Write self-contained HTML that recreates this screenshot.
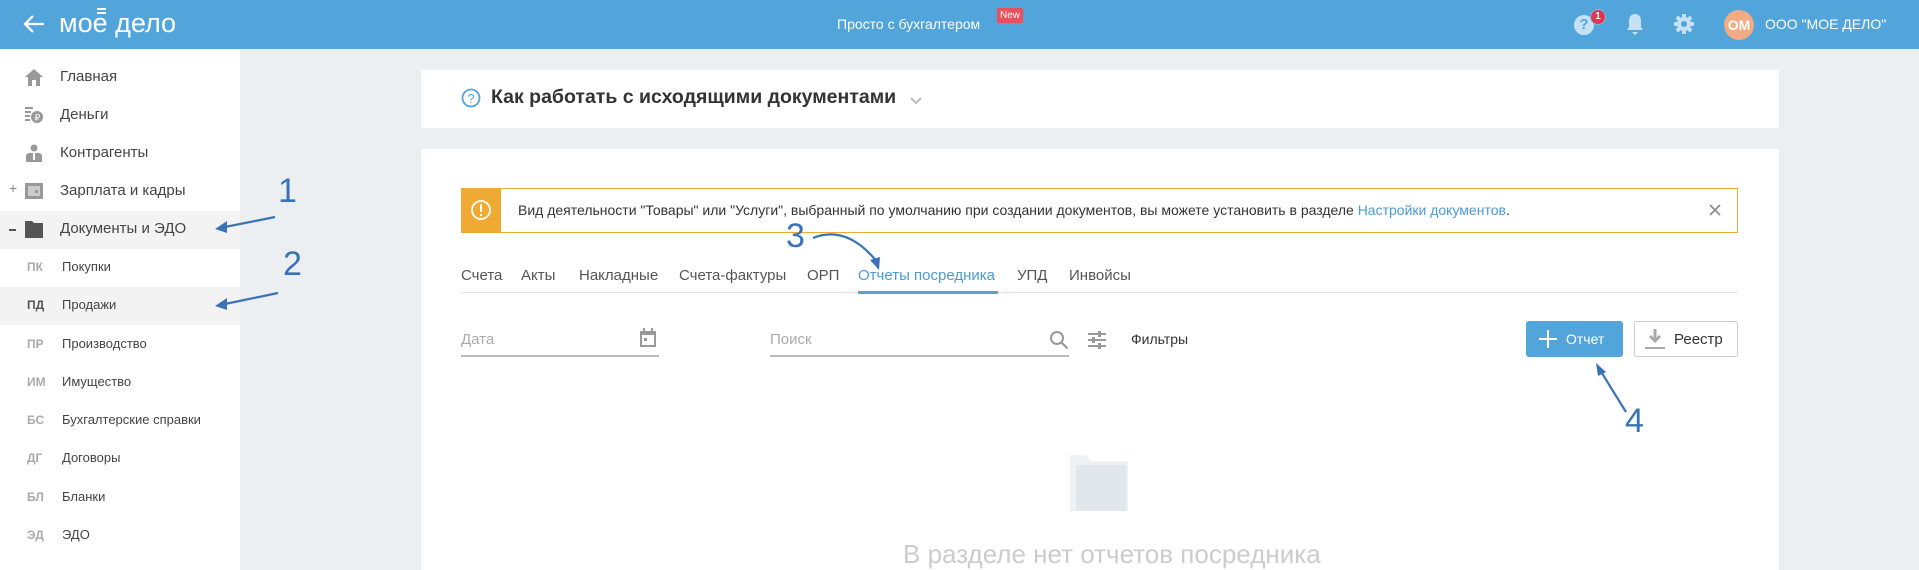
<!DOCTYPE html>
<html><head><meta charset="utf-8"><style>
*{box-sizing:border-box;margin:0;padding:0}
body{width:1919px;height:570px;overflow:hidden;background:#ebeff2;font-family:"Liberation Sans",sans-serif;color:#333;position:relative}
.hdr{position:absolute;left:0;top:0;width:1919px;height:49px;background:#52a5db;color:#fff}
.abs{position:absolute}
.side{position:absolute;left:0;top:49px;width:240px;height:521px;background:#fff}
.it{position:absolute;left:60px;font-size:15px;color:#444;white-space:nowrap}
.ic{position:absolute;left:24px;width:20px;height:18px}
.sub{position:absolute;font-size:13px;color:#444;left:62px}
.ab{position:absolute;left:27px;font-size:12px;font-weight:bold;color:#aaa}
.hl{position:absolute;left:0;width:240px;height:38px;background:#f3f3f3}
.card{position:absolute;background:#fff;left:421px;width:1358px}
.tab{position:absolute;top:267px;font-size:15px;color:#555}
.ann{position:absolute;color:#3a72b8;font-size:34px}
</style></head><body>
<div class="hdr">
<svg class="abs" style="left:22px;top:14px" width="24" height="20"><path d="M22 10H3M11 2L3 10l8 8" stroke="#fff" stroke-width="2.2" fill="none"/></svg>
<div class="abs" style="left:59px;top:8px;font-size:27px;letter-spacing:0">моe дело</div>
<div class="abs" style="left:97px;top:8px;width:9px;height:2px;background:#fff"></div>
<div class="abs" style="left:97px;top:12px;width:9px;height:2px;background:#fff"></div>
<div class="abs" style="left:837px;top:16px;font-size:14px">Просто с бухгалтером</div>
<div class="abs" style="left:997px;top:8px;background:#e8515a;font-size:10px;padding:2px 3px;border-radius:2px">New</div>
<div class="abs" style="left:1574px;top:15px;width:20px;height:20px;border-radius:50%;background:#c6e1f5;color:#52a5db;font-weight:bold;font-size:15px;text-align:center;line-height:20px">?</div>
<div class="abs" style="left:1590px;top:9px;width:16px;height:16px;border-radius:50%;background:#e8334f;border:1px solid #7fbde6;font-size:10px;text-align:center;line-height:14px;font-weight:bold">1</div>
<svg class="abs" style="left:1626px;top:13px" width="18" height="22"><path d="M9 1c-4 0-6 3-6 7v6l-2 3h16l-2-3V8c0-4-2-7-6-7zM6 19h6l-3 3z" fill="#c6e1f5"/></svg>
<svg class="abs" style="left:1673px;top:13px" width="22" height="22"><g fill="#c6e1f5"><circle cx="11" cy="11" r="7"/><rect x="9" y="1" width="4" height="20"/><rect x="1" y="9" width="20" height="4"/><rect x="9" y="1" width="4" height="20" transform="rotate(45 11 11)"/><rect x="9" y="1" width="4" height="20" transform="rotate(-45 11 11)"/></g><circle cx="11" cy="11" r="3" fill="#52a5db"/></svg>
<div class="abs" style="left:1724px;top:10px;width:30px;height:30px;border-radius:50%;background:#f2ab84;font-size:14px;font-weight:bold;text-align:center;line-height:30px">ОМ</div>
<div class="abs" style="left:1765px;top:16px;font-size:14px">ООО "МОЕ ДЕЛО"</div>
</div>

<div class="side">
<div class="hl" style="top:162px"></div>
<div class="hl" style="top:238px"></div>
<svg class="ic" style="top:19px" viewBox="0 0 20 18"><path d="M10 1L1 9h3v9h4v-6h4v6h4V9h3z" fill="#999"/></svg>
<div class="it" style="top:19px">Главная</div>
<svg class="ic" style="top:57px" viewBox="0 0 20 18"><g fill="#999"><rect x="1" y="1" width="8" height="2"/><rect x="1" y="5" width="6" height="2"/><rect x="1" y="9" width="5" height="2"/><rect x="1" y="13" width="5" height="2"/><circle cx="13" cy="11" r="6"/></g><text x="10.5" y="14.5" font-size="9" fill="#fff" font-family="Liberation Sans">₽</text></svg>
<div class="it" style="top:57px">Деньги</div>
<svg class="ic" style="top:95px" viewBox="0 0 20 18"><g fill="#999"><circle cx="10" cy="4" r="3.5"/><path d="M2 18v-6c0-2 2-3 4-3h8c2 0 4 1 4 3v6z"/></g><rect x="9" y="9" width="2" height="7" fill="#fff"/></svg>
<div class="it" style="top:95px">Контрагенты</div>
<div class="abs" style="left:9px;top:131px;font-size:14px;color:#888">+</div>
<svg class="ic" style="top:133px" viewBox="0 0 20 18"><rect x="1" y="1" width="18" height="16" fill="#999"/><rect x="4" y="4" width="12" height="10" fill="#ccc"/><rect x="11" y="8" width="3" height="3" fill="#999"/></svg>
<div class="it" style="top:133px">Зарплата и кадры</div>
<div class="abs" style="left:9px;top:180px;width:7px;height:2px;background:#555"></div>
<svg class="ic" style="top:171px" viewBox="0 0 20 18"><path d="M1 1h7l2 2h9v15H1z" fill="#555"/></svg>
<div class="it" style="top:171px">Документы и ЭДО</div>
<div class="ab" style="top:211px">ПК</div><div class="sub" style="top:210px">Покупки</div>
<div class="ab" style="top:249px;color:#555">ПД</div><div class="sub" style="top:248px">Продажи</div>
<div class="ab" style="top:288px">ПР</div><div class="sub" style="top:287px">Производство</div>
<div class="ab" style="top:326px">ИМ</div><div class="sub" style="top:325px">Имущество</div>
<div class="ab" style="top:364px">БС</div><div class="sub" style="top:363px">Бухгалтерские справки</div>
<div class="ab" style="top:402px">ДГ</div><div class="sub" style="top:401px">Договоры</div>
<div class="ab" style="top:441px">БЛ</div><div class="sub" style="top:440px">Бланки</div>
<div class="ab" style="top:479px">ЭД</div><div class="sub" style="top:478px">ЭДО</div>
</div>

<div class="card" style="top:70px;height:58px"></div>
<svg class="abs" style="left:461px;top:88px" width="20" height="20"><circle cx="10" cy="10" r="8.5" stroke="#52a5db" stroke-width="1.8" fill="none"/><text x="10" y="15" font-size="13" fill="#52a5db" text-anchor="middle" font-family="Liberation Sans">?</text></svg>
<div class="abs" style="left:491px;top:86px;font-size:19.5px;font-weight:bold;color:#333;white-space:nowrap">Как работать с исходящими документами</div>
<svg class="abs" style="left:909px;top:96px" width="14" height="9"><path d="M2 2l5 5 5-5" stroke="#bbb" stroke-width="2" fill="none"/></svg>

<div class="card" style="top:149px;height:421px"></div>
<div class="abs" style="left:461px;top:188px;width:1277px;height:45px;border:1.5px solid #eeaa33;background:#fff"></div>
<div class="abs" style="left:461px;top:188px;width:40px;height:45px;background:#eeaa33"></div>
<svg class="abs" style="left:470px;top:199px" width="22" height="22"><circle cx="11" cy="11" r="9" stroke="#fff" stroke-width="1.8" fill="none"/><rect x="10" y="5" width="2" height="8" fill="#fff"/><rect x="10" y="15" width="2" height="2" fill="#fff"/></svg>
<div class="abs" style="left:518px;top:202px;font-size:14px;color:#333;white-space:nowrap">Вид деятельности "Товары" или "Услуги", выбранный по умолчанию при создании документов, вы можете установить в разделе <span style="color:#4a9ad6">Настройки документов</span>.</div>
<svg class="abs" style="left:1708px;top:203px" width="14" height="14"><path d="M2 2l10 10M12 2L2 12" stroke="#888" stroke-width="1.6"/></svg>

<div class="tab" style="left:461px">Счета</div>
<div class="tab" style="left:521px">Акты</div>
<div class="tab" style="left:579px">Накладные</div>
<div class="tab" style="left:679px">Счета-фактуры</div>
<div class="tab" style="left:807px">ОРП</div>
<div class="tab" style="left:858px;color:#4a9ad6">Отчеты посредника</div>
<div class="tab" style="left:1017px">УПД</div>
<div class="tab" style="left:1069px">Инвойсы</div>
<div class="abs" style="left:461px;top:292px;width:1277px;height:1px;background:#e3e3e3"></div>
<div class="abs" style="left:858px;top:291px;width:140px;height:3px;background:#52a5db"></div>

<div class="abs" style="left:461px;top:331px;font-size:15px;color:#aaa">Дата</div>
<svg class="abs" style="left:639px;top:328px" width="18" height="20"><rect x="1" y="3" width="16" height="16" fill="#999"/><rect x="3" y="7" width="12" height="10" fill="#fff"/><rect x="4" y="0" width="2" height="4" fill="#999"/><rect x="12" y="0" width="2" height="4" fill="#999"/><rect x="5" y="10" width="3" height="3" fill="#999"/></svg>
<div class="abs" style="left:461px;top:355px;width:198px;height:1.5px;background:#bbb"></div>
<div class="abs" style="left:770px;top:331px;font-size:15px;color:#aaa">Поиск</div>
<svg class="abs" style="left:1049px;top:330px" width="20" height="20"><circle cx="8" cy="8" r="6" stroke="#999" stroke-width="2" fill="none"/><path d="M12.5 12.5l6 6" stroke="#999" stroke-width="2.2"/></svg>
<div class="abs" style="left:770px;top:355px;width:299px;height:1.5px;background:#bbb"></div>
<svg class="abs" style="left:1087px;top:330px" width="20" height="20"><g stroke="#999" stroke-width="2"><path d="M1 4h18M1 10h18M1 16h18"/></g><g fill="#999"><rect x="11" y="1" width="3" height="6"/><rect x="5" y="7" width="3" height="6"/><rect x="11" y="13" width="3" height="6"/></g></svg>
<div class="abs" style="left:1131px;top:331px;font-size:14px;color:#333">Фильтры</div>

<div class="abs" style="left:1526px;top:321px;width:97px;height:36px;background:#52a5db;border-radius:3px"></div>
<svg class="abs" style="left:1539px;top:330px" width="18" height="18"><path d="M9 0v18M0 9h18" stroke="#fff" stroke-width="2"/></svg>
<div class="abs" style="left:1566px;top:331px;font-size:14px;color:#fff">Отчет</div>
<div class="abs" style="left:1634px;top:321px;width:104px;height:36px;background:#fff;border:1px solid #ccc;border-radius:3px"></div>
<svg class="abs" style="left:1644px;top:328px" width="22" height="22"><path d="M11 1v12M6 8l5 5 5-5" stroke="#aaa" stroke-width="3" fill="none"/><rect x="1" y="19" width="20" height="2" fill="#aaa"/></svg>
<div class="abs" style="left:1674px;top:331px;font-size:15px;color:#333">Реестр</div>

<svg class="abs" style="left:1068px;top:453px" width="62" height="60"><path d="M2 2h16l4 6h38v50H2z" fill="#eef2f5"/><path d="M8 12h50v46H8z" fill="#e2e7ec"/></svg>
<div class="abs" style="left:903px;top:539px;font-size:26px;color:#ccc;white-space:nowrap">В разделе нет отчетов посредника</div>

<svg class="abs" style="left:0;top:0" width="1919" height="570">
<g stroke="#3a72b8" stroke-width="2.2" fill="none">
<path d="M275 217L220 228"/><path d="M278 293L220 305"/>
<path d="M813 238c20-8 42-4 65 25"/>
<path d="M1626 412L1600 370"/>
</g>
<g fill="#3a72b8">
<path d="M215 229l12-8 0 12z"/>
<path d="M215 306l12-8 0 12z"/>
<path d="M879 270l-9-10 10-3z"/>
<path d="M1596 363l10 9-8 4z"/>
</g>
</svg>
<div class="ann" style="left:278px;top:172px">1</div>
<div class="ann" style="left:283px;top:245px">2</div>
<div class="ann" style="left:786px;top:217px">3</div>
<div class="ann" style="left:1625px;top:402px">4</div>
</body></html>
